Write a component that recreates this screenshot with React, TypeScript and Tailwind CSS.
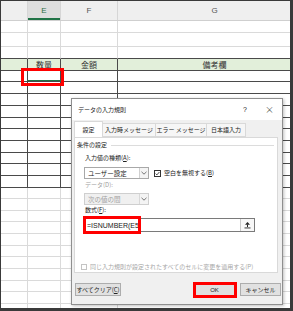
import React from 'react';

const JP = "font-['Noto_Sans_CJK_JP',sans-serif]";

type Row = { h: number; kind: 'light' | 'head' | 'table'; bottomDark?: boolean };

const ROWS: Row[] = [
  { h: 12, kind: 'light' },
  { h: 14, kind: 'light' },
  { h: 12, kind: 'light', bottomDark: true },
  { h: 12, kind: 'head', bottomDark: true },
  ...[11, 12, 12, 12, 11, 12, 12, 11, 12, 12].map((h) => ({ h, kind: 'table' as const, bottomDark: true })),
  ...[11, 12, 11, 12, 12, 11, 12, 12, 11, 12, 12].map((h) => ({ h, kind: 'light' as const })),
];

function SheetRow({ row }: { row: Row }) {
  const dark = row.kind !== 'light';
  const v = dark ? 'border-r-[#4a4a4a]' : 'border-r-[#dadada]';
  const b = row.bottomDark ? 'border-b-[#4a4a4a]' : 'border-b-[#dadada]';
  const bg = row.kind === 'head' ? 'bg-[#e2efda]' : 'bg-white';
  const cell = `h-full shrink-0 border-r border-b ${v} ${b} ${bg} flex items-center justify-center text-[8px] leading-none text-[#333] ${JP}`;
  return (
    <div className="flex shrink-0" style={{ height: row.h }}>
      <div className={`${cell} w-[27px]`} />
      <div className={`${cell} w-[33px]`}>{row.kind === 'head' ? '数量' : ''}</div>
      <div className={`${cell} w-[57px]`}>{row.kind === 'head' ? '金額' : ''}</div>
      <div className={`${cell} w-[193px] border-r-0`}>{row.kind === 'head' ? '備考欄' : ''}</div>
    </div>
  );
}

function Chevron() {
  return (
    <svg width="6" height="4" viewBox="0 0 6 4">
      <polyline points="0.5,0.8 3,3.2 5.5,0.8" fill="none" stroke="#555" strokeWidth="0.8" />
    </svg>
  );
}

function Select({ text, disabled }: { text: string; disabled?: boolean }) {
  return (
    <div
      className={`flex h-[12px] w-[65px] items-stretch border ${
        disabled ? 'border-[#cfcfcf] bg-[#f0f0f0] text-[#a0a0a0]' : 'border-[#a8a8a8] bg-white text-[#222]'
      }`}
    >
      <div className="flex flex-1 items-center pl-[3px] text-[6.5px] leading-none">{text}</div>
      <div className={`flex w-[9px] items-center justify-center border-l ${disabled ? 'border-[#d8d8d8]' : 'border-[#d0d0d0]'} bg-[#f4f4f4]`}>
        <Chevron />
      </div>
    </div>
  );
}

function Tab({ label, w, active }: { label: string; w: number; active?: boolean }) {
  return (
    <div
      className={`flex shrink-0 items-center justify-center border border-[#d9d9d9] text-[6px] leading-none text-[#222] ${
        active ? 'relative z-10 -mt-[2px] h-[16px] border-b-0 bg-white' : 'h-[14px] border-l-0 bg-[#f6f6f6] first:border-l'
      }`}
      style={{ width: w }}
    >
      {label}
    </div>
  );
}

function Button({ label, w }: { label: React.ReactNode; w: number }) {
  return (
    <div
      className="flex h-[13px] shrink-0 items-center justify-center border border-[#adadad] bg-[#e1e1e1] text-[6px] leading-none text-[#222]"
      style={{ width: w }}
    >
      {label}
    </div>
  );
}

function Dialog() {
  return (
    <div className={`absolute left-[70px] top-[97px] flex h-[207px] w-[212px] flex-col border border-[#8f8f8f] bg-[#f0f0f0] shadow-[1px_1px_3px_rgba(0,0,0,0.25)] ${JP}`}>
      <div className="flex h-[21px] shrink-0 items-center bg-white text-[6px] leading-none text-[#222]">
        <span className="ml-[6px]">データの入力規則</span>
        <span className="ml-auto w-[6px] text-center font-['Liberation_Sans',sans-serif] text-[7px]">?</span>
        <span className="ml-[17px] mr-[8px] text-[9px] font-light text-[#333]">×</span>
      </div>
      <div className="flex flex-1 flex-col pl-[2px] pt-[3px]">
        <div className="flex h-[14px] shrink-0">
          <Tab label="設定" w={29} active />
          <Tab label="入力時メッセージ" w={53} />
          <Tab label="エラー メッセージ" w={51} />
          <Tab label="日本語入力" w={39} />
        </div>
        <div className="flex h-[136px] w-[204px] shrink-0 flex-col border border-[#d9d9d9] bg-white text-[#222]">
          <div className="ml-[2px] mt-[3px] flex h-[8px] items-center text-[6px] leading-none">
            <span>条件の設定</span>
            <div className="ml-[4px] mr-[3px] h-px flex-1 bg-[#dcdcdc]" />
          </div>
          <div className="flex flex-col pl-[9px]">
            <div className="mt-[5px] h-[8px] pl-[1px] text-[6px] leading-[8px]">
              入力値の種類(<span className="underline">A</span>):
            </div>
            <div className="mt-[5px] flex items-center">
              <Select text="ユーザー設定" />
              <div className="ml-[5px] flex h-[7px] w-[7px] items-center justify-center border border-[#333] bg-white">
                <svg width="5" height="5" viewBox="0 0 5 5">
                  <polyline points="0.6,2.6 1.9,3.9 4.4,1" fill="none" stroke="#222" strokeWidth="0.8" />
                </svg>
              </div>
              <span className="ml-[3px] text-[6px] leading-none">
                空白を無視する(<span className="underline">B</span>)
              </span>
            </div>
            <div className="mt-[2px] h-[8px] pl-[1px] text-[6px] leading-[8px] text-[#a0a0a0]">データ(D):</div>
            <div className="mt-[4px]">
              <Select text="次の値の間" disabled />
            </div>
            <div className="mt-[1px] h-[8px] pl-[1px] text-[6px] leading-[8px]">
              数式(<span className="underline">F</span>):
            </div>
            <div className="mt-[4px] flex h-[14px] w-[171px] items-stretch border border-[#7a7a7a] bg-white">
              <div className="flex flex-1 items-center pl-[2px] font-['Liberation_Sans',sans-serif] text-[7px] leading-none text-[#222]">
                =ISNUMBER(E5
              </div>
              <div className="flex w-[14px] items-center justify-center border-l border-[#c8c8c8] bg-[#f7f7f7]">
                <svg width="7" height="8" viewBox="0 0 7 8">
                  <polygon points="3.5,1 6,3.8 1,3.8" fill="#222" />
                  <rect x="3" y="3.5" width="1" height="2.5" fill="#222" />
                  <rect x="0.5" y="6.5" width="6" height="0.9" fill="#222" />
                </svg>
              </div>
            </div>
            <div className="-ml-[3px] mt-[31px] flex h-[8px] items-center">
              <div className="h-[6px] w-[6px] border border-[#c4c4c4] bg-white" />
              <span className="ml-[3px] text-[6px] leading-none text-[#a6a6a6]">
                同じ入力規則が設定されたすべてのセルに変更を適用する(P)
              </span>
            </div>
          </div>
        </div>
        <div className="mt-[10px] flex items-center">
          <div className="ml-[1px]">
            <Button
              label={
                <>
                  すべてクリア(<span className="underline">C</span>)
                </>
              }
              w={46}
            />
          </div>
          <div className="ml-auto flex gap-[5px] mr-[1px]">
            <Button label={<span className="font-['Liberation_Sans',sans-serif]">OK</span>} w={41} />
            <Button label="キャンセル" w={41} />
          </div>
        </div>
      </div>
    </div>
  );
}

export default function App() {
  return (
    <div className="relative h-[311px] w-[293px] overflow-hidden border-b-[3px] border-l border-r-[3px] border-t border-[#3a3a3a] bg-white">
      <div className="flex h-full flex-col overflow-hidden">
        <div className="flex h-[20px] shrink-0 border-b border-[#cfcfcf] bg-[#efefef] font-['Liberation_Sans',sans-serif] text-[8px] leading-none text-[#555]">
          <div className="h-full w-[27px] shrink-0 border-r border-[#d6d6d6]" />
          <div className="flex h-full w-[33px] shrink-0 items-center justify-center border-r border-[#d6d6d6] bg-[#dedede] text-[#2f6f45] shadow-[inset_0_-2px_0_#217346]">
            E
          </div>
          <div className="flex h-full w-[57px] shrink-0 items-center justify-center border-r border-[#d6d6d6]">F</div>
          <div className="flex h-full w-[193px] shrink-0 items-center justify-center">G</div>
        </div>
        {ROWS.map((row, i) => (
          <SheetRow key={i} row={row} />
        ))}
      </div>

      <div className="absolute left-[26px] top-[79px] h-[1px] w-[34px] bg-[#217346]" />
      <div className="absolute left-[20px] top-[67px] h-[18px] w-[43px] border-[3px] border-[#ff0000]" />

      <Dialog />

      <div className="absolute left-[82px] top-[215px] h-[18px] w-[58px] border-[3px] border-[#ff0000]" />
      <div className="absolute left-[192px] top-[281px] h-[16px] w-[44px] border-[3px] border-[#ff0000]" />
    </div>
  );
}
